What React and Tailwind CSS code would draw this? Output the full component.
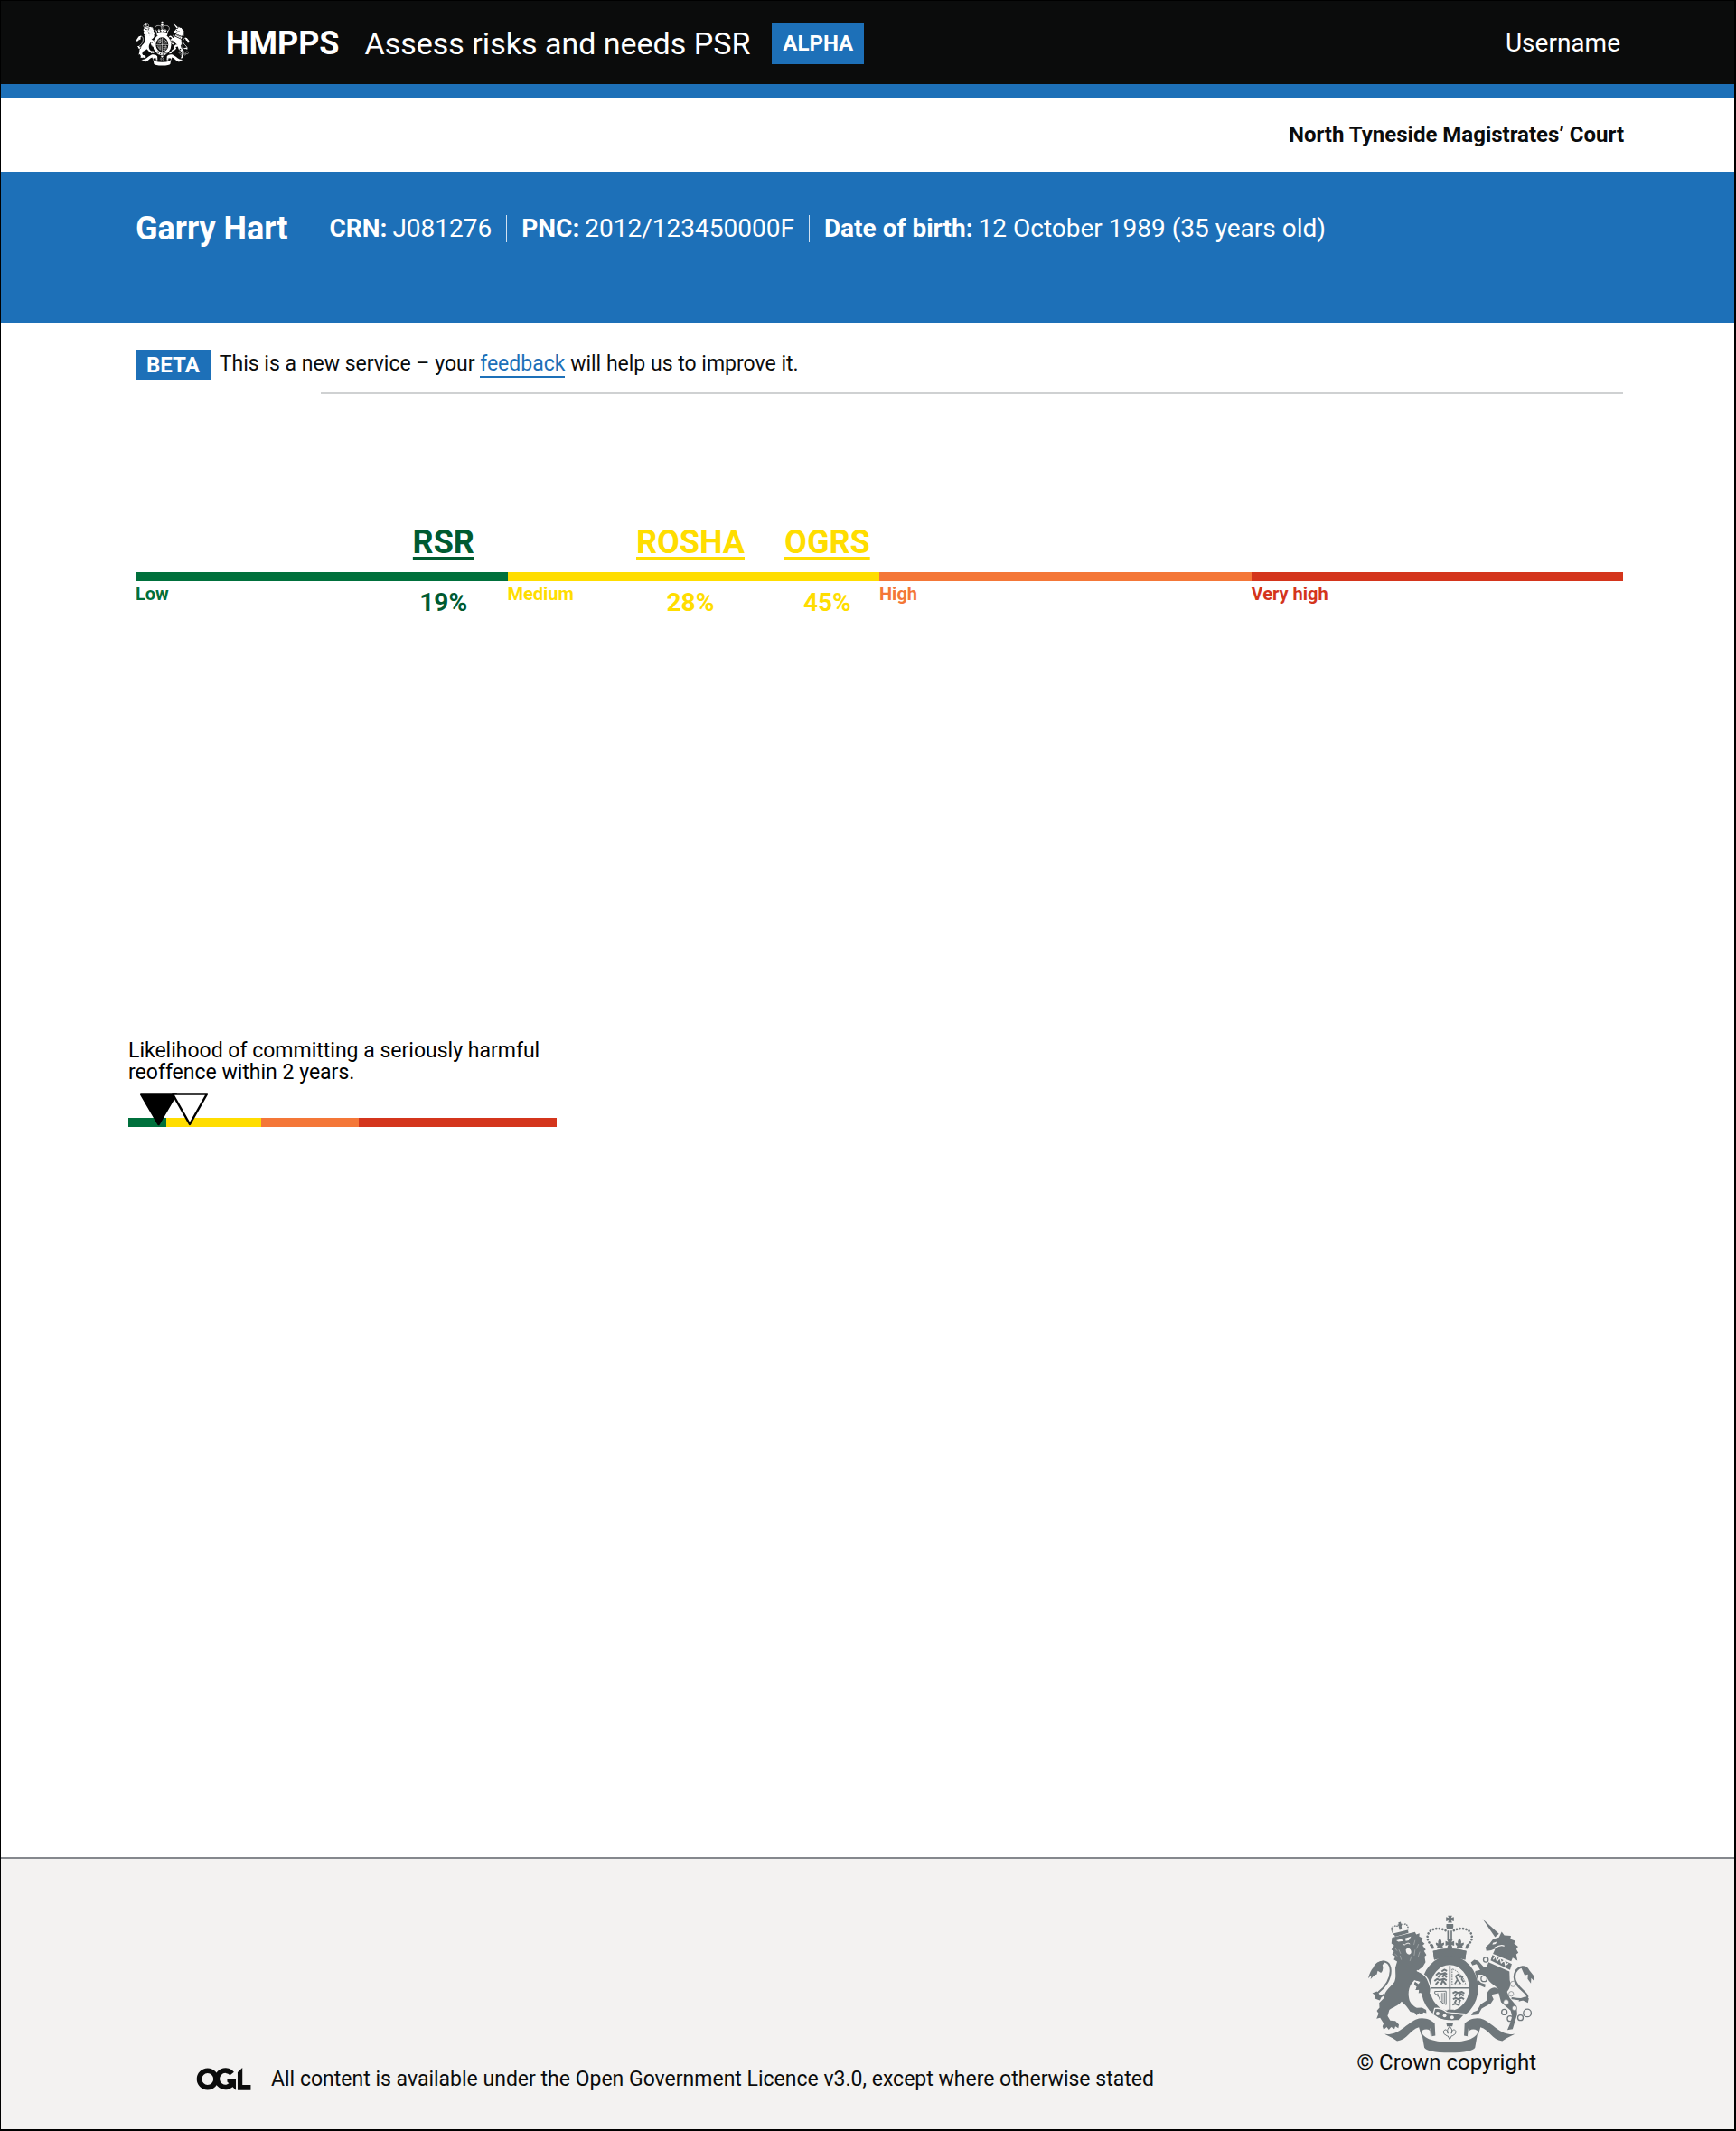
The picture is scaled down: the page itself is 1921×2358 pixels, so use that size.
import React from "react";

const bands = [
  { label: "Low", bar: "bg-[#00703c]", text: "text-[#00703c]" },
  { label: "Medium", bar: "bg-[#ffdd00]", text: "text-[#ffdd00]" },
  { label: "High", bar: "bg-[#f47738]", text: "text-[#f47738]" },
  { label: "Very high", bar: "bg-[#d4351c]", text: "text-[#d4351c]" },
];

const scores = [
  { name: "RSR", value: "19%", at: 20.7, text: "text-[#005a30]" },
  { name: "ROSHA", value: "28%", at: 37.3, text: "text-[#ffdd00]" },
  { name: "OGRS", value: "45%", at: 46.5, text: "text-[#ffdd00]" },
];

function Crest({ className, hollow }) {
  const dots = { fill: "none", stroke: "currentColor", strokeLinecap: "round" };
  return (
    <svg className={className} viewBox="65 55 565 466" fill="currentColor" role="img" aria-label="Royal coat of arms">
      {/* crown */}
      <path d="M336 60h14l-3 8 9-3v14l-9-3 3 8h-14l3-8-9 3V65l9 3z" />
      <path d="M331 88h23q2 12-2 18h-19q-4-6-2-18z" />
      <path {...dots} strokeWidth="8" strokeDasharray="0.1 10.5" d="M328 110C306 98 272 102 268 128C265 146 278 152 286 172" />
      <path {...dots} strokeWidth="8" strokeDasharray="0.1 10.5" d="M356 110C378 98 412 102 416 128C419 146 406 152 398 172" />
      <path d="M334 110h5v28h-5zM345 110h5v28h-5z" />
      <path d="M333 140h19l-4 8 9-3v16l-9-3 4 12h-19l4-12-9 3v-16l9 3z" />
      <path d="M309 136q8 9 5 17l9-3q2 8-5 11l2 8h-21l2-8q-7-3-5-11l8 3q-3-8 5-17zM375 136q8 9 5 17l9-3q2 8-5 11l2 8h-21l2-8q-7-3-5-11l8 3q-3-8 5-17z" />
      <path d="M277 152l9 5 5 14-10-2zM407 152l-9 5-5 14 10-2z" />
      <path d="M286 178Q342 162 398 178L394 208Q342 192 290 208z" />
      <path d="M291 185Q342 170 393 185" fill="none" stroke={hollow} strokeWidth="3" />

      {/* lion */}
      <path {...dots} strokeWidth="5" strokeDasharray="0.1 7" d="M155 122C140 100 150 90 174 97C190 80 208 90 201 113" />
      <path d="M155 119l46-11 3 10-45 13zM170 83l8-2 1 6 5 1-4 4 2 14-8 2-3-14-5-3 5-2z" />
      <path d="M149 134L226 115L230 123L241 119L240 130L252 136L247 144L258 154L251 160L262 174L256 178L264 192L258 197L261 216L252 231L240 240L232 248C248 254 266 270 269 286L276 304L275 318L268 324L260 319L250 326L246 318L238 319L240 308L228 309L232 298L223 291L226 282L238 290L244 281L224 276L214 288C205 302 202 320 206 338C208 352 220 363 232 369L249 368L263 376L264 386L254 384L249 392L240 386L231 394L224 385L210 382C202 368 190 356 181 348C171 362 150 368 140 376L134 396L143 411L160 413L172 425L170 437L160 431L157 440L146 433L138 442L131 433L121 442L117 431L121 421L109 402L97 405L104 388L98 379L107 368L106 352L121 337C123 310 148 296 157 282C163 270 160 252 160 234L166 214L155 207L160 197L149 190L155 180L147 174L156 160L147 153Z" />
      <path d="M163 143l17-5 7 7-17 2zM193 136l20-6-8 13-10 2z" fill={hollow} />
      <path d="M195 174q8-9 16 0q6 12-3 16q-12 1-13-16z" fill={hollow} />
      <path d="M184 155q8 6 11 0q8-6 14 0" fill="none" stroke={hollow} strokeWidth="3" />
      <path d="M158 168l8 10M158 188l9 8M172 174l6 14M176 194l4 14M226 142l-4 16M238 155l-7 16M226 174l-3 20M242 181l-6 18M214 196l-5 16" stroke={hollow} strokeWidth="1" fill="none" />
      <path d="M123 324C98 342 88 327 103 317C124 302 149 270 143 235C139 211 115 208 102 223" fill="none" stroke="currentColor" strokeWidth="6" />
      <path d="M126 212Q98 208 86 234Q76 244 69 270L80 260L77 273Q91 257 98 257L101 245L112 252Q122 242 117 226Z" />
      <path d="M98 314l-15 6 11 7-2 11 16 6 6-12z" />

      {/* unicorn */}
      <path d="M452 71L507 121L494 132Z" />
      <path d="M462 166L476 153L487 139L507 133L516 114L525 126L547 128L545 138L561 144L558 153L571 164L565 172L572 184L565 190L569 211L553 201L548 213L487 188L495 170L481 176L465 178Z" />
      <path d="M487 151l13-4-4 8-11 2z" fill={hollow} />
      <path d="M493 168q20-12 32-6" fill="none" stroke={hollow} strokeWidth="4" />
      <path d="M485 192L550 222L544 242L479 210Z" />
      <path d="M488 207l7-12 6 17 9-11 5 17 10-9 4 17 9-7" stroke={hollow} strokeWidth="4" fill="none" />
      <path d="M472 216L542 247L543 276C548 292 543 305 534 315L543 336L566 363L568 391L559 420L553 440L535 443L543 424L551 398L546 378L514 350L506 320L482 325L489 340L480 354L449 371L438 391L414 394L420 383L434 378L446 357L465 345L468 335C463 323 471 307 483 303C492 298 499 302 506 306C491 291 473 284 468 268L452 258L436 258L435 273L447 285L462 290L460 301L437 291L424 264L428 246L444 242L432 222L418 227L413 217L424 208L437 211L456 232L466 232Z" />
      <path {...dots} strokeWidth="7" d="M552 337C578 342 607 342 602 329C596 314 559 296 559 267C559 239 585 221 601 241" />
      <path d="M580 231Q600 223 609 243L624 262L625 280L615 269L614 287L603 272L604 257L593 260Z" />
      <path d="M596 331l11 6-3 15-17-8-14 4 3-10z" />
      <g fill="none" stroke="currentColor" strokeWidth="4">
        <circle cx="463" cy="208" r="8" />
        <circle cx="457" cy="271" r="10" />
        <circle cx="525" cy="383" r="9" />
        <circle cx="544" cy="405" r="9" />
        <circle cx="579" cy="402" r="9" />
        <circle cx="602" cy="386" r="13" />
      </g>
      <g fill={hollow} stroke="currentColor" strokeWidth="2">
        <circle cx="554" cy="289" r="9" />
        <circle cx="548" cy="322" r="8" />
        <circle cx="531" cy="350" r="9" />
        <circle cx="559" cy="370" r="8" />
      </g>

      {/* garter and shield */}
      <ellipse cx="342" cy="302" rx="96" ry="110" fill={hollow} />
      <path d="M286 178Q342 162 398 178L394 208Q342 192 290 208z" />
      <ellipse cx="342" cy="302" rx="80" ry="92" fill="none" stroke="currentColor" strokeWidth="30" />
      <path d="M340 228h5v149h-5zM277 300h130v5H277z" />
      <g fill="none" stroke="currentColor" strokeWidth="6" strokeLinejoin="round">
        <path d="M296 260l9-8 8 4 13-4 7 5M303 267l8-8M318 267l5-10 9 10M291 279l9-7 8 4 15-4 9 5M295 291l9-10M313 291l6-13 11 13M315 247l9-6 9 4" />
        <path d="M352 320l9-5 8 4 14-4 8 6M359 331l6-10M374 331l5-10 10 8M353 340l9-4 8 4 12-5 8 5M359 352l5-10M373 352l5-10M351 359l9-4 11 4 6-5" />
        <path d="M359 289l9-14-6-12 10-7 5 10 9-3-4 10 7 10M370 277l9 12" strokeWidth="5" />
      </g>
      <path d="M350 292V238Q386 253 396 292Z" fill="none" stroke="currentColor" strokeWidth="3" strokeDasharray="5 3" />
      <path d="M292 314L330 313V358Q310 353 307 336Q304 323 292 321ZM302 320V331M310 319V345M317 319V351M324 318V354" fill="none" stroke="currentColor" strokeWidth="3" />
      <path d="M292 371Q317 368 331 383L391 392L374 411Q328 416 303 403L286 392Z" stroke={hollow} strokeWidth="4" />
      <path d="M352 386L412 391" fill="none" stroke={hollow} strokeWidth="4" />
      <circle cx="302" cy="388" r="6" fill={hollow} />
      <circle cx="325" cy="395" r="6" fill={hollow} />
      <circle cx="350" cy="401" r="6" fill={hollow} />
      <path d="M334 375h22v8h-22z" />

      {/* lion's forepaw crossing the garter */}
      <path d="M232 246C250 252 266 268 271 286L277 304L275 320L268 324L260 319L250 326L246 318L238 319L240 308L228 309L232 298L223 291L226 282L238 290L244 281L224 276Z" />
      <path d="M232 244Q266 258 273 286L279 304L277 322" fill="none" stroke={hollow} strokeWidth="4" />

      {/* pendant */}
      <path d="M330 418h24l-3 13h-18z" />
      <path d="M342 430q12 12 6 25q1-13 10-13q9 5 3 14l-10 7h-3l-6 12-6-12h-3l-10-7q-6-9 3-14q9 0 10 13q-6-13 6-25z" fill="none" stroke="currentColor" strokeWidth="3" />

      {/* ribbon */}
      <path d="M124 457C172 462 194 424 228 408C255 398 281 409 292 422L294 462L278 465L276 445Q264 436 249 445L247 462L239 434C210 442 200 476 166 480L151 470Z" />
      <path d="M560 457C512 462 490 424 456 408C429 398 403 409 392 422L390 462L406 465L408 445Q420 436 435 445L437 462L445 434C474 442 484 476 518 480L533 470Z" />
      <path d="M247 445Q250 481 342 484Q434 481 437 445L427 502Q419 518 342 519Q265 518 257 502Z" />
      <path d="M278 438L281 466M406 438L403 466" stroke={hollow} strokeWidth="3" />
    </svg>
  );
}

function OglLogo() {
  return (
    <svg className="h-[25px] w-[61px] shrink-0" viewBox="36 38 182 76" fill="none" stroke="#0b0c0c" strokeWidth="17" role="img" aria-label="OGL">
      <circle cx="73" cy="76" r="28" />
      <path d="M155 58A28 28 0 1 0 158 88" />
      <path d="M139 77H168V113L155 100L139 85Z" fill="#0b0c0c" stroke="none" />
      <path d="M174 53L190 38V96H218V113H174Z" fill="#0b0c0c" stroke="none" />
    </svg>
  );
}

function Fact({ label, children }) {
  return (
    <div className="flex gap-1.5 border-l border-white/80 pl-4 first:border-l-0 first:pl-0">
      <dt className="font-bold">{label}</dt>
      <dd>{children}</dd>
    </div>
  );
}

export default function App() {
  return (
    <div className="flex min-h-screen flex-col border border-r-2 border-b-2 border-black bg-white font-[Roboto,'Liberation_Sans',sans-serif] text-[23px] leading-6 text-[#0b0c0c]">
      <header>
        <div className="flex h-[92px] items-center bg-[#0b0c0c] pt-0.5 pr-[126px] pl-[149px] text-white">
          <Crest className="h-[50px] w-[60px]" hollow="#0b0c0c" />
          <a href="#home" className="ml-10 flex items-center">
            <span className="text-4xl font-bold">HMPPS</span>
            <span className="ml-7 text-[34px] leading-10">Assess risks and needs PSR</span>
          </a>
          <strong className="ml-6 flex h-[45px] items-center bg-[#1d70b8] px-3 text-2xl font-bold">ALPHA</strong>
          <a href="#account" className="ml-auto text-[28px]">Username</a>
        </div>
        <div className="h-[15px] bg-[#1d70b8]" />
        <p className="flex h-[82px] items-center justify-end pr-[122px] text-2xl font-bold">North Tyneside Magistrates’ Court</p>
      </header>

      <section className="h-[167px] bg-[#1d70b8] pt-12 pr-[126px] pl-[149px] text-white">
        <div className="flex items-center gap-[46px]">
          <h1 className="text-4xl leading-[30px] font-bold">Garry Hart</h1>
          <dl className="flex gap-4 text-[28px] leading-[30px]">
            <Fact label="CRN:">J081276</Fact>
            <Fact label="PNC:">2012/123450000F</Fact>
            <Fact label="Date of birth:">12 October 1989 (35 years old)</Fact>
          </dl>
        </div>
      </section>

      <main className="flex-1 pr-[123px] pl-[149px]">
        <div className="mt-[30px] flex items-center gap-2.5">
          <strong className="flex h-[33px] items-center bg-[#1d70b8] px-3 text-2xl font-bold text-white">BETA</strong>
          <p className="pb-0.5">
            This is a new service – your{" "}
            <a href="#feedback" className="border-b-2 border-[#1d70b8] text-[#1d70b8]">feedback</a>{" "}
            will help us to improve it.
          </p>
        </div>
        <hr className="mt-3.5 ml-[205px] border-t-2 border-[#cfd1d2]" />

        <section className="relative mt-[144px] pt-[53px]" aria-label="Risk scores">
          <ul className="grid grid-cols-4">
            {bands.map((band) => (
              <li key={band.label}>
                <div className={`h-[10px] ${band.bar}`} />
                <p className={`mt-0.5 text-xl leading-6 font-bold ${band.text}`}>{band.label}</p>
              </li>
            ))}
          </ul>
          {scores.map((score) => (
            <div
              key={score.name}
              className={`absolute top-0 flex -translate-x-1/2 flex-col items-center font-bold ${score.text}`}
              style={{ left: `${score.at}%` }}
            >
              <a href={`#${score.name}`} className="border-b-4 border-current pt-1 text-4xl leading-8">{score.name}</a>
              <span className="mt-8 text-[28px] leading-[30px]">{score.value}</span>
            </div>
          ))}
        </section>

        <section className="-ml-2 mt-[482px] w-[474px]">
          <p className="text-black">
            Likelihood of committing a seriously harmful reoffence within 2 years.
          </p>
          <svg className="mt-1.5 block h-[42px] w-full" viewBox="0 0 474 42" role="img" aria-label="Reoffending scale">
            <path d="M0 32h42v10H0z" fill="#00703c" />
            <path d="M42 32h105v10H42z" fill="#ffdd00" />
            <path d="M147 32h108v10H147z" fill="#f47738" />
            <path d="M255 32h219v10H255z" fill="#d4351c" />
            <path d="M14 5.500H53L33.500 39Z" fill="#000" stroke="#000" strokeWidth="2.500" strokeLinejoin="round" />
            <path d="M49 5.500H87L68 39Z" fill="#fff" stroke="#000" strokeWidth="2.500" strokeLinejoin="round" />
          </svg>
        </section>
      </main>

      <footer className="flex items-end justify-between border-t-2 border-[#85888d] bg-[#f3f2f1] pt-[61px] pr-[219px] pb-[43px] pl-[216px]">
        <div className="flex items-center gap-[22px]">
          <OglLogo />
          <p>All content is available under the Open Government Licence v3.0, except where otherwise stated</p>
        </div>
        <a href="#copyright" className="mb-[21px] flex flex-col items-end leading-5">
          <Crest className="h-[154px] w-[188px] text-[#6f777b]" hollow="#f3f2f1" />
          <span className="text-2xl leading-5">© Crown copyright</span>
        </a>
      </footer>
    </div>
  );
}
